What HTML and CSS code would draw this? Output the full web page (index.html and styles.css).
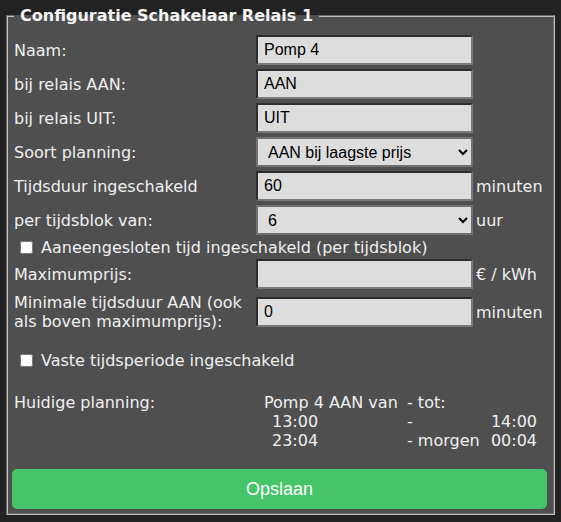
FILE: index.html
```html
<!DOCTYPE html>
<html>
<head>
<meta charset="utf-8">
<link rel="stylesheet" href="styles.css">
</head>
<body>
<fieldset class="config">
  <legend class="legend">Configuratie Schakelaar Relais 1</legend>
  <div class="form">
    <label class="lbl">Naam:</label>
    <input class="field" type="text" value="Pomp 4">
    <span class="unit"></span>

    <label class="lbl">bij relais AAN:</label>
    <input class="field" type="text" value="AAN">
    <span class="unit"></span>

    <label class="lbl">bij relais UIT:</label>
    <input class="field" type="text" value="UIT">
    <span class="unit"></span>

    <label class="lbl">Soort planning:</label>
    <select class="pick"><option>AAN bij laagste prijs</option></select>
    <span class="unit"></span>

    <label class="lbl">Tijdsduur ingeschakeld</label>
    <input class="field" type="text" value="60">
    <span class="unit">minuten</span>

    <label class="lbl">per tijdsblok van:</label>
    <select class="pick"><option>6</option></select>
    <span class="unit">uur</span>

    <label class="check-row"><input class="check" type="checkbox"><span>Aaneengesloten tijd ingeschakeld (per tijdsblok)</span></label>

    <label class="lbl">Maximumprijs:</label>
    <input class="field" type="text" value="">
    <span class="unit">€ / kWh</span>

    <label class="lbl">Minimale tijdsduur AAN (ook als boven maximumprijs):</label>
    <input class="field" type="text" value="0">
    <span class="unit">minuten</span>

    <label class="check-row vaste"><input class="check" type="checkbox"><span>Vaste tijdsperiode ingeschakeld</span></label>

    <div class="lbl top planning-label">Huidige planning:</div>
    <div class="planning">
      <span class="c1">Pomp 4 AAN van</span><span class="c23">- tot:</span>
      <span class="c1 ind">13:00</span><span class="c2">-</span><span class="c3">14:00</span>
      <span class="c1 ind">23:04</span><span class="c2">- morgen</span><span class="c3">00:04</span>
    </div>
  </div>
  <button class="save" type="button">Opslaan</button>
</fieldset>
</body>
</html>
```

FILE: styles.css
```css
html, body {
  margin: 0;
  padding: 0;
  background: #222222;
}

body {
  font-family: "DejaVu Sans", Verdana, sans-serif;
  font-size: 16px;
  color: #f0f0f0;
}

.config {
  margin: 6px 6px 0 6px;
  padding: 10px 6px 4px 4px;
  border: 2px groove #c0c0c0;
  background: #4f4f4f;
}

.legend {
  padding: 0 6px;
  margin-left: 2px;
  font-weight: bold;
  color: #f4f4f4;
}

.form {
  display: grid;
  grid-template-columns: 244px 217px 1fr;
  row-gap: 4px;
  align-items: center;
}

.lbl {
  padding-left: 2px;
}

.lbl.top {
  align-self: start;
}

.unit {
  padding-left: 3px;
}

.field {
  box-sizing: border-box;
  width: 217px;
  height: 30px;
  margin: 0;
  padding: 0 6px;
  border-width: 2px;
  border-style: solid;
  border-color: #2e2e2e #7a7a7a #7a7a7a #2e2e2e;
  background: #dddddd;
  color: #000;
  font-family: "Liberation Sans", Arial, sans-serif;
  font-size: 16px;
}

.pick {
  box-sizing: border-box;
  width: 217px;
  height: 30px;
  margin: 0;
  padding: 0 4px 0 6px;
  border: 2px solid #707070;
  border-radius: 0;
  background-color: #dddddd;
  color: #000;
  font-family: "Liberation Sans", Arial, sans-serif;
  font-size: 16px;
}

.check-row {
  grid-column: 1 / -1;
  height: 16px;
  display: flex;
  align-items: center;
  gap: 8px;
  padding-left: 8px;
}

.check-row.vaste {
  margin-top: 16px;
  height: 19px;
}

.check {
  margin: 0;
  width: 13px;
  height: 13px;
}

.planning-label {
  margin-top: 19px;
}

.planning {
  grid-column: 2 / 4;
  align-self: start;
  justify-self: start;
  box-sizing: border-box;
  width: 281px;
  margin-top: 19px;
  padding-left: 8px;
  display: grid;
  grid-template-columns: 134px max-content 1fr;
  column-gap: 9px;
}

.c23 {
  grid-column: 2 / 4;
}

.c1.ind {
  padding-left: 8px;
}

.c3 {
  text-align: right;
}

.save {
  display: block;
  box-sizing: border-box;
  width: 100%;
  height: 40px;
  margin-top: 19px;
  border: none;
  border-radius: 5px;
  background: #45c46a;
  color: #ffffff;
  font-family: "Liberation Sans", Arial, sans-serif;
  font-size: 18px;
}
```
